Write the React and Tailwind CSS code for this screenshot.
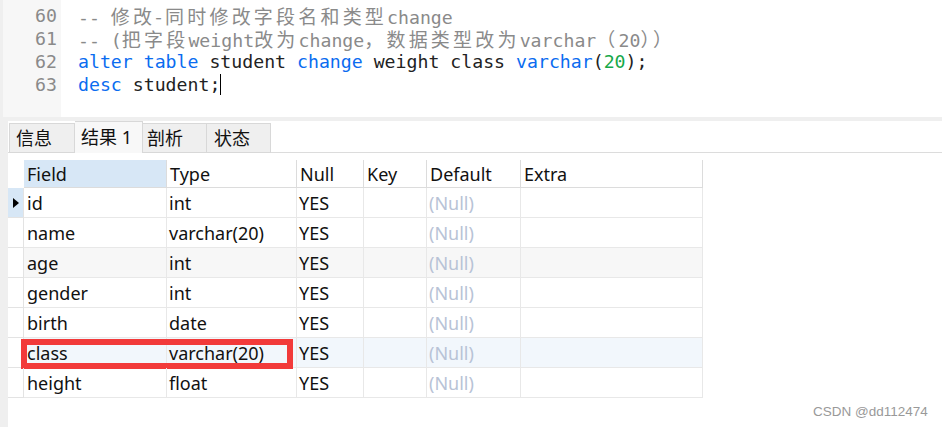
import React from 'react'

const mono = { fontFamily: '"DejaVu Sans Mono", "Liberation Mono", "Noto Sans CJK SC", monospace' }
const ui = { fontFamily: '"Noto Sans", "Noto Sans CJK SC", sans-serif' }

function Cjk({ children }) {
    return <span className="text-[19px] tracking-[3.2px]" style={{ fontFamily: '"Noto Sans CJK SC", sans-serif' }}>{children}</span>
}

const cols = [
    { key: 'field', label: 'Field', w: 'w-[143px]' },
    { key: 'type', label: 'Type', w: 'w-[130px]' },
    { key: 'nul', label: 'Null', w: 'w-[67px]' },
    { key: 'k', label: 'Key', w: 'w-[63px]' },
    { key: 'def', label: 'Default', w: 'w-[94px]' },
    { key: 'extra', label: 'Extra', w: 'w-[182px]' },
]

const rows = [
    { field: 'id', type: 'int' },
    { field: 'name', type: 'varchar(20)' },
    { field: 'age', type: 'int', bg: 'bg-[#f7f7f7]' },
    { field: 'gender', type: 'int' },
    { field: 'birth', type: 'date' },
    { field: 'class', type: 'varchar(20)', bg: 'bg-[#f2f7fc]', marked: true },
    { field: 'height', type: 'float' },
]

export default function App() {
    return (
        <div className="w-[942px] h-[427px] bg-white relative overflow-hidden flex flex-col" style={ui}>
            {/* editor */}
            <div className="h-[117px] flex shrink-0">
                <div className="w-[3px] bg-[#efefef]" />
                <div className="w-[58px] bg-[#f7f7f7] pt-[4px] pr-[4px] text-right text-[18.2px] leading-[23px] text-[#8a8a8a]" style={mono}>
                    <div className="h-[23px]">60</div>
                    <div className="h-[23px]">61</div>
                    <div className="h-[23px]">62</div>
                    <div className="h-[23px]">63</div>
                </div>
                <div className="flex-1 pl-[17px] pt-[4px] text-[18.2px] leading-[23px] whitespace-pre text-[#222]" style={mono}>
                    <div className="h-[23px] text-[#8a8a8a]">-- <Cjk>修改-同时修改字段名和类型</Cjk>change</div>
                    <div className="h-[23px] text-[#8a8a8a]">-- (<Cjk>把字段</Cjk>weight<Cjk>改为</Cjk>change<Cjk>，数据类型改为</Cjk>varchar<Cjk>（</Cjk>20<Cjk>））</Cjk></div>
                    <div className="h-[23px]">
                        <span className="text-[#0a6cf0]">alter table</span> student <span className="text-[#0a6cf0]">change</span> weight class <span className="text-[#0a6cf0]">varchar</span>(<span className="text-[#16a849]">20</span>);
                    </div>
                    <div className="h-[23px] flex items-center">
                        <span><span className="text-[#0a6cf0]">desc</span> student;</span>
                        <span className="inline-block w-px h-[21px] bg-black" />
                    </div>
                </div>
            </div>
            <div className="h-[4px] bg-[#efefef] shrink-0" />

            {/* result panel */}
            <div className="flex flex-1 min-h-0">
                <div className="w-[8px] bg-[#efefef] shrink-0" />
                <div className="flex-1 flex flex-col min-w-0">
                    <div className="h-[32px] flex items-start pl-[1px] border-b border-[#dcdcdc] shrink-0 text-[18px] text-[#111]">
                        <div className="mt-[2px] h-[30px] w-[66px] bg-[#efefef] border border-[#d8d8d8] pl-[6px] leading-[28px]">信息</div>
                        <div className="h-[32px] w-[68px] bg-[#f8f8f8] border border-b-0 border-l-0 border-[#d8d8d8] pl-[6px] leading-[30px]">结果 1</div>
                        <div className="mt-[2px] h-[30px] w-[64px] bg-[#efefef] border border-l-0 border-[#d8d8d8] pl-[4px] leading-[28px]">剖析</div>
                        <div className="mt-[2px] h-[30px] w-[64px] bg-[#efefef] border border-l-0 border-[#d8d8d8] pl-[7px] leading-[28px]">状态</div>
                    </div>

                    <div className="pt-[7px] text-[18px] text-[#111]">
                        <div className="flex h-[28px] leading-[28px]">
                            <div className="w-[16px]" />
                            {cols.map((c, i) => (
                                <div key={c.key} className={`${c.w} pl-[3px] border-r border-b border-[#dcdcdc] ${i === 0 ? 'bg-[#d7e7f6]' : ''}`}>
                                    {c.label}
                                </div>
                            ))}
                        </div>
                        {rows.map((r, ri) => (
                            <div key={r.field} className="flex h-[30px] leading-[30px] relative">
                                <div className={`w-[16px] border-r border-b border-[#e3e3e3] flex items-center justify-center ${ri === 0 ? 'bg-[#d7e7f6]' : ''}`}>
                                    {ri === 0 && (
                                        <svg width="6" height="10" viewBox="0 0 6 10"><path d="M0 0 L6 5 L0 10 Z" fill="#000" /></svg>
                                    )}
                                </div>
                                <div className={`flex ${r.bg || ''}`}>
                                    <div className="w-[143px] pl-[3px] border-r border-b border-[#e8e8e8]">{r.field}</div>
                                    <div className="w-[130px] pl-[2px] border-r border-b border-[#e8e8e8]">{r.type}</div>
                                    <div className="w-[67px] pl-[2px] border-r border-b border-[#e8e8e8]">YES</div>
                                    <div className="w-[63px] border-r border-b border-[#e8e8e8]" />
                                    <div className="w-[94px] pl-[2px] border-r border-b border-[#e8e8e8] text-[#b8c3d6]">(Null)</div>
                                    <div className="w-[182px] border-r border-b border-[#e8e8e8]" />
                                </div>
                                {r.marked && (
                                    <div className="absolute left-[13px] top-[1px] w-[272px] h-[30px] border-[6px] border-[#f23a3a]" />
                                )}
                            </div>
                        ))}
                    </div>
                </div>
            </div>

            <div className="absolute left-[813px] top-[402px] text-[13.5px] text-[#999]" style={{ fontFamily: '"Liberation Sans", Arial, sans-serif' }}>
                CSDN @dd112474
            </div>
        </div>
    )
}
